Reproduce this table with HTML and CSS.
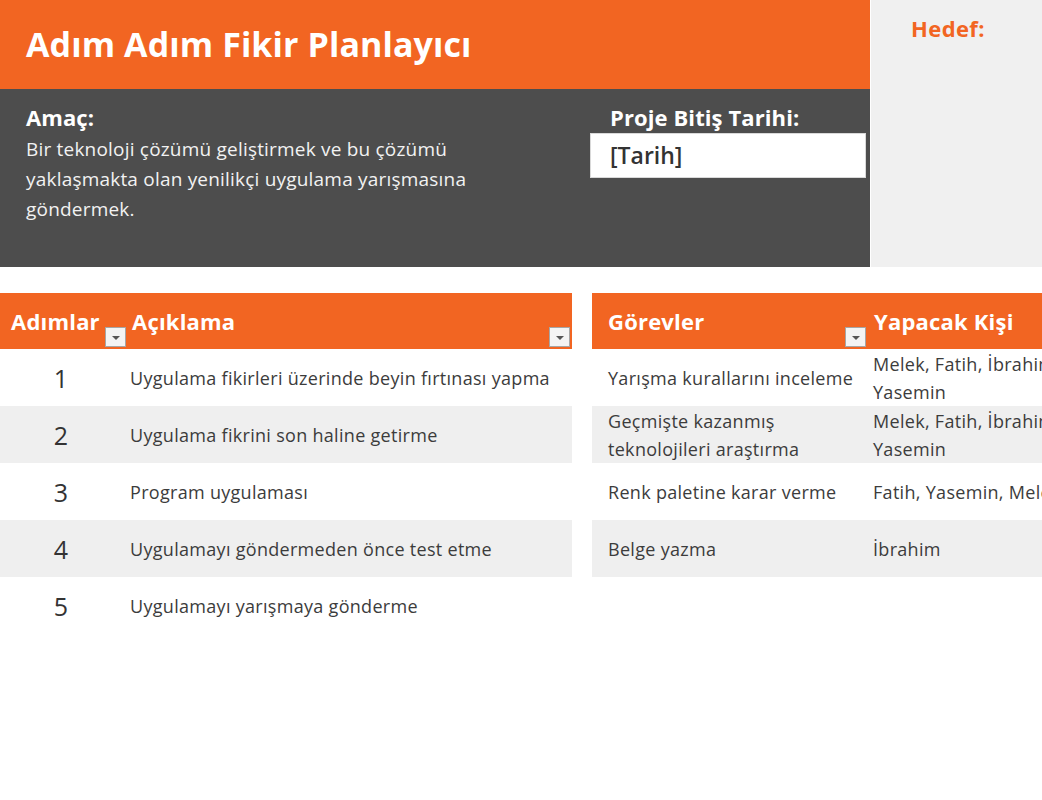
FILE: index.html
```html
<!DOCTYPE html>
<html lang="tr">
<head>
<meta charset="utf-8">
<title>Adım Adım Fikir Planlayıcı</title>
<link rel="stylesheet" href="styles.css">
</head>
<body>
<div class="page">
  <div class="top">
    <div class="main-head">
      <header class="title-bar">
        <h1 class="title">Adım Adım Fikir Planlayıcı</h1>
      </header>
      <section class="info">
        <div class="goal">
          <div class="label">Amaç:</div>
          <p class="goal-text">Bir teknoloji çözümü geliştirmek ve bu çözümü yaklaşmakta olan yenilikçi uygulama yarışmasına göndermek.</p>
        </div>
        <div class="due">
          <div class="label">Proje Bitiş Tarihi:</div>
          <div class="date-box">[Tarih]</div>
        </div>
      </section>
    </div>
    <aside class="side">
      <div class="side-label">Hedef:</div>
    </aside>
  </div>

  <div class="tables">
    <div class="table steps">
      <div class="row head">
        <div class="cell c-num">Adımlar<span class="filter"></span></div>
        <div class="cell c-desc">Açıklama<span class="filter"></span></div>
      </div>
      <div class="row"><div class="cell c-num num">1</div><div class="cell c-desc">Uygulama fikirleri üzerinde beyin fırtınası yapma</div></div>
      <div class="row alt"><div class="cell c-num num">2</div><div class="cell c-desc">Uygulama fikrini son haline getirme</div></div>
      <div class="row"><div class="cell c-num num">3</div><div class="cell c-desc">Program uygulaması</div></div>
      <div class="row alt"><div class="cell c-num num">4</div><div class="cell c-desc">Uygulamayı göndermeden önce test etme</div></div>
      <div class="row"><div class="cell c-num num">5</div><div class="cell c-desc">Uygulamayı yarışmaya gönderme</div></div>
      <span class="resize"></span>
    </div>

    <div class="table tasks">
      <div class="row head">
        <div class="cell c-task">Görevler<span class="filter"></span></div>
        <div class="cell c-who">Yapacak Kişi</div>
      </div>
      <div class="row"><div class="cell c-task">Yarışma kurallarını inceleme</div><div class="cell c-who two">Melek, Fatih, İbrahim ve<br>Yasemin</div></div>
      <div class="row alt"><div class="cell c-task two">Geçmişte kazanmış<br>teknolojileri araştırma</div><div class="cell c-who two">Melek, Fatih, İbrahim ve<br>Yasemin</div></div>
      <div class="row"><div class="cell c-task">Renk paletine karar verme</div><div class="cell c-who">Fatih, Yasemin, Melek</div></div>
      <div class="row alt"><div class="cell c-task">Belge yazma</div><div class="cell c-who">İbrahim</div></div>
    </div>
  </div>
</div>
</body>
</html>
```

FILE: styles.css
```css
html, body {
  margin: 0;
  padding: 0;
  background: #ffffff;
  overflow: hidden;
}
body {
  font-family: "Open Sans", "Lato", sans-serif;
  color: #3c3c3c;
}
.page {
  width: 1200px;
}
.top {
  display: grid;
  grid-template-columns: 870px 330px;
  column-gap: 1px;
  height: 267px;
}
.main-head {
  display: flex;
  flex-direction: column;
}
.title-bar {
  background: #f26522;
  height: 89px;
  display: flex;
  align-items: center;
  padding-left: 26px;
  box-sizing: border-box;
}
.title {
  margin: 0;
  color: #ffffff;
  font-size: 34px;
  font-weight: 700;
  letter-spacing: 0.1px;
  padding-bottom: 2px;
}
.info {
  background: #4d4d4d;
  flex: 1;
  display: flex;
  padding: 13px 0 0 26px;
  box-sizing: border-box;
}
.goal {
  width: 564px;
}
.label {
  color: #ffffff;
  font-size: 22px;
  font-weight: 700;
  line-height: 30px;
  letter-spacing: 0.1px;
}
.goal-text {
  margin: 2px 0 0;
  color: #f2f2f2;
  font-size: 19px;
  letter-spacing: 0.2px;
  line-height: 30px;
  width: 470px;
}
.due {
  display: flex;
  flex-direction: column;
}
.due .label {
  padding-left: 20px;
}
.date-box {
  margin-top: 1px;
  width: 276px;
  height: 45px;
  box-sizing: border-box;
  background: #ffffff;
  border: 1px solid #d9d9d9;
  padding-left: 19px;
  font-size: 23px;
  font-weight: 600;
  line-height: 43px;
  color: #333333;
}
.side {
  background: #f0f0f0;
  padding: 13px 0 0 40px;
}
.side-label {
  color: #f26522;
  font-size: 22px;
  font-weight: 700;
  letter-spacing: 0.4px;
}

.tables {
  display: flex;
  gap: 20px;
  margin-top: 26px;
}
.table {
  position: relative;
  display: flex;
  flex-direction: column;
}
.steps { width: 572px; }
.tasks { width: 560px; }
.row {
  display: flex;
  height: 57px;
  align-items: center;
}
.row.alt { background: #efefef; }
.row.head {
  background: #f26522;
  height: 56px;
  color: #ffffff;
  font-weight: 700;
}
.cell {
  position: relative;
  height: 100%;
  display: flex;
  align-items: center;
  box-sizing: border-box;
  font-size: 18px;
  letter-spacing: 0.3px;
  white-space: nowrap;
}
.head .cell { font-size: 22px; letter-spacing: 0.2px; }
.c-num { width: 128px; padding-left: 11px; }
.c-num.num {
  justify-content: center;
  padding-left: 0;
  padding-right: 6px;
  font-size: 25px;
  color: #333333;
}
.c-desc { flex: 1; padding-left: 2px; }
.head .c-desc { padding-left: 4px; }
.c-task { width: 276px; padding-left: 16px; }
.c-who { flex: 1; padding-left: 5px; }
.head .c-who { padding-left: 6px; }
.cell.two { line-height: 28px; }

.filter {
  position: absolute;
  right: 2px;
  bottom: 2px;
  width: 21px;
  height: 20px;
  box-sizing: border-box;
  background: #f4f4f4;
  border: 1px solid #a6a6a6;
}
.filter::after {
  content: "";
  position: absolute;
  left: 6px;
  top: 8px;
  border-left: 4px solid transparent;
  border-right: 4px solid transparent;
  border-top: 4px solid #555555;
}
.resize {
  position: absolute;
  right: 3px;
  bottom: -4px;
  width: 0;
  height: 0;
  border-left: 4px solid transparent;
  border-bottom: 4px solid #1f3fa6;
}
```
